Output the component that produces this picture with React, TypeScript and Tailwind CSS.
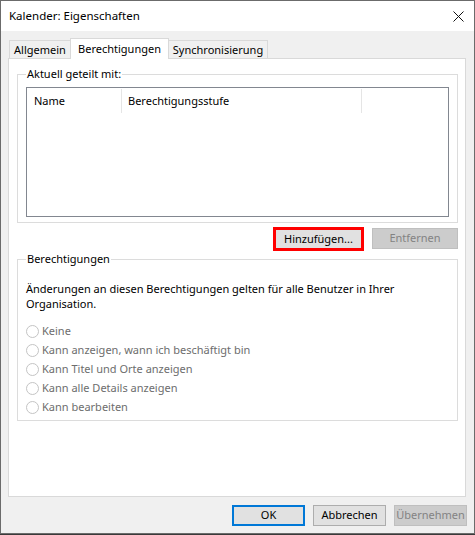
import React from "react";

const font = "font-['Segoe_UI','Noto_Sans',sans-serif] text-[11px]";

function GroupBox({ title, className, children }: { title: string; className: string; children: React.ReactNode }) {
  return (
    <div className={"relative border border-[#dcdcdc] " + className}>
      <span className="absolute left-[8px] -top-[9px] bg-white px-px leading-[16px] text-black">{title}</span>
      {children}
    </div>
  );
}

function Radio({ label }: { label: string }) {
  return (
    <div className="flex h-[19px] items-center gap-[3px]">
      <span className="h-[13px] w-[13px] rounded-full border border-[#c4c4c4] bg-white" />
      <span className="text-[#6d6d6d]">{label}</span>
    </div>
  );
}

export default function App() {
  const options = [
    "Keine",
    "Kann anzeigen, wann ich beschäftigt bin",
    "Kann Titel und Orte anzeigen",
    "Kann alle Details anzeigen",
    "Kann bearbeiten",
  ];

  return (
    <div className={"h-[535px] w-[475px] bg-[#3a3a3a] " + font}>
      <div className="flex h-[534px] w-[475px] flex-col border border-[#6b6b6b]">
        {/* title bar */}
        <div className="flex h-[30px] shrink-0 items-center justify-between bg-white pl-[8px] pr-[10px]">
          <span className="text-[11.5px] text-black">Kalender: Eigenschaften</span>
          <svg width="11" height="11" viewBox="0 0 11 11" className="mt-px">
            <path d="M0.5 0.5 L10.5 10.5 M10.5 0.5 L0.5 10.5" stroke="#111" strokeWidth="1" />
          </svg>
        </div>

        <div className="flex flex-1 flex-col bg-[#f0f0f0] pl-[7px] pr-[8px] pt-[7px]">
          {/* tabs */}
          <div className="flex h-[20px] pl-px">
            <div className="mt-[2px] flex h-[19px] w-[61px] items-center justify-center border border-b-0 border-r-0 border-[#d9d9d9] text-black">
              Allgemein
            </div>
            <div className="relative z-10 flex h-[21px] w-[99px] items-start justify-center border border-b-0 border-[#d9d9d9] bg-white pt-[2px] text-black">
              Berechtigungen
            </div>
            <div className="mt-[2px] flex h-[19px] w-[99px] items-center justify-center border border-b-0 border-l-0 border-[#d9d9d9] text-black">
              Synchronisierung
            </div>
          </div>

          {/* panel */}
          <div className="flex h-[439px] flex-col border border-[#d9d9d9] bg-white pl-[8px] pr-[7px] pt-[15px]">
            <GroupBox title="Aktuell geteilt mit:" className="h-[149px] pl-[8px] pr-[8px] pt-[12px]">
              <div className="h-[130px] border border-[#828790] bg-white">
                <div className="flex h-[25px] pt-[1px] text-black">
                  <div className="flex w-[95px] items-center border-r border-[#e5e5e5] pl-[7px]">Name</div>
                  <div className="flex w-[240px] items-center border-r border-[#e5e5e5] pl-[6px]">Berechtigungsstufe</div>
                </div>
              </div>
            </GroupBox>

            <div className="mt-[4px] flex h-[24px] items-start justify-end gap-[8px]">
              <div className="flex h-[24px] w-[91px] items-center justify-center border-[3px] border-[#ff0000] bg-[#e1e1e1] text-black">
                Hinzufügen...
              </div>
              <div className="mt-px flex h-[21px] w-[86px] items-center justify-center border border-[#bfbfbf] bg-[#cccccc] text-[#838383]">
                Entfernen
              </div>
            </div>

            <GroupBox title="Berechtigungen" className="mt-[8px] h-[162px] pl-[8px] pr-[8px] pt-[21px]">
              <p className="leading-[15px] text-black">
                Änderungen an diesen Berechtigungen gelten für alle Benutzer in Ihrer Organisation.
              </p>
              <div className="mt-[11px] flex flex-col">
                {options.map((o) => (
                  <Radio key={o} label={o} />
                ))}
              </div>
            </GroupBox>
          </div>

          {/* dialog buttons */}
          <div className="-mr-px mt-[8px] flex justify-end gap-[8px]">
            <div className="flex h-[21px] w-[73px] items-center justify-center border-2 border-[#0078d7] bg-[#e1e1e1] text-black">OK</div>
            <div className="flex h-[21px] w-[73px] items-center justify-center border border-[#adadad] bg-[#e1e1e1] text-black">Abbrechen</div>
            <div className="flex h-[21px] w-[73px] items-center justify-center border border-[#bfbfbf] bg-[#cccccc] text-[#838383]">Übernehmen</div>
          </div>
        </div>
      </div>
    </div>
  );
}
